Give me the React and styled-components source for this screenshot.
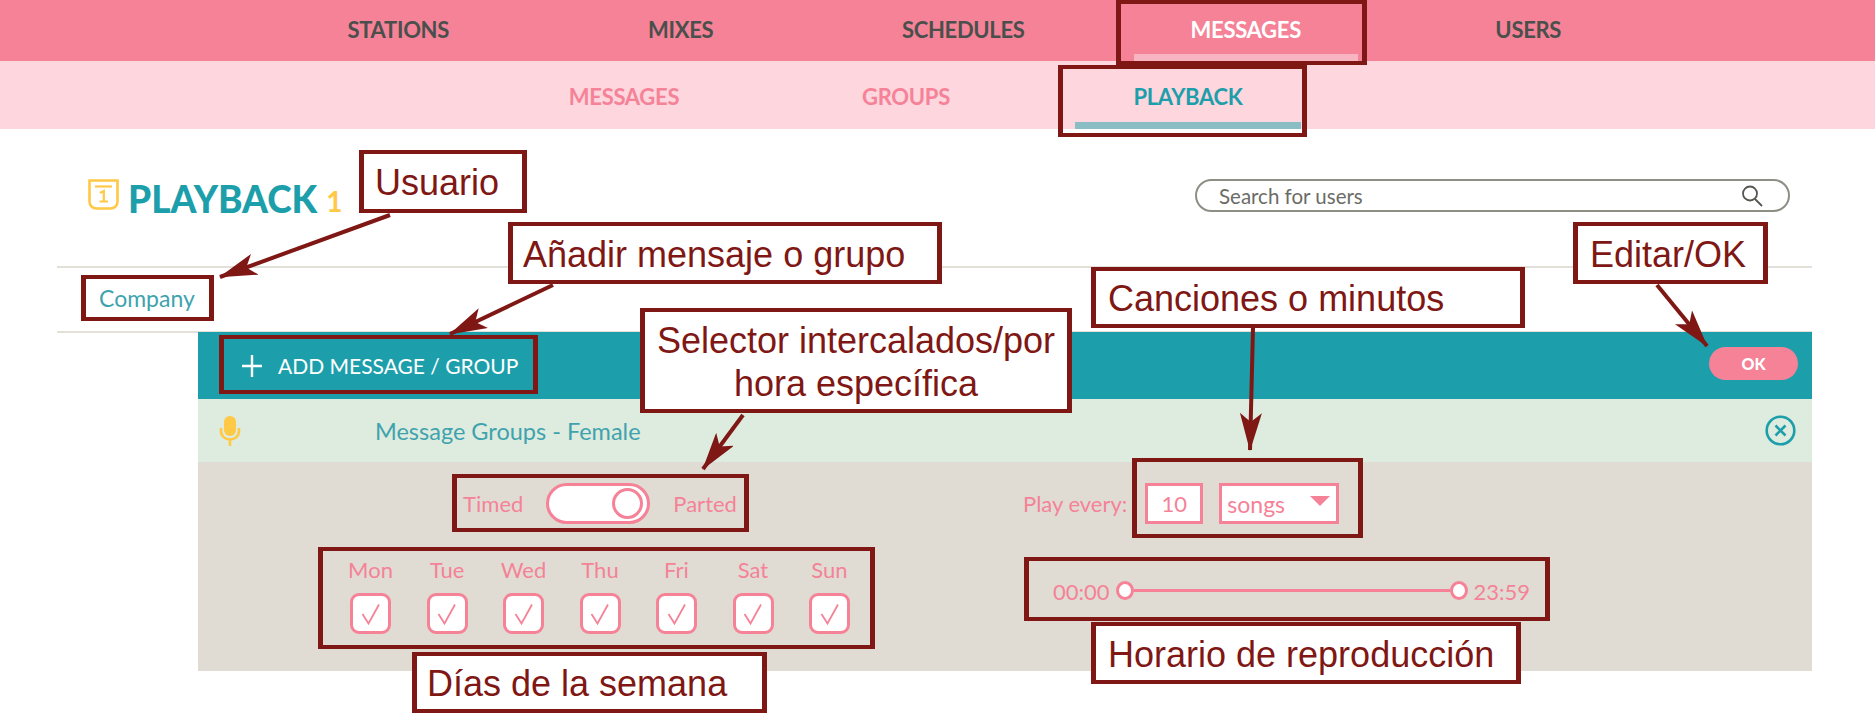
import styled, { createGlobalStyle } from "styled-components";

const PINK = "#f58297";
const TEAL = "#1d9fab";
const YELLOW = "#ffc845";
const MAROON = "#7f1714";
const UI_FONT = `"Lato", "Open Sans", sans-serif`;

const days = ["Mon", "Tue", "Wed", "Thu", "Fri", "Sat", "Sun"];

const notes = [
  { text: "Usuario", x: 359, y: 150, w: 168, h: 63, pad: 11 },
  { text: "Añadir mensaje o grupo", x: 508, y: 222, w: 434, h: 62, pad: 10 },
  { text: "Canciones o minutos", x: 1091, y: 267, w: 434, h: 61, pad: 12 },
  { text: "Editar/OK", x: 1573, y: 222, w: 195, h: 62, pad: 12 },
  { text: "Selector intercalados/por hora específica", x: 640, y: 308, w: 432, h: 105, pad: 10, center: true },
  { text: "Días de la semana", x: 412, y: 652, w: 355, h: 61, pad: 10 },
  { text: "Horario de reproducción", x: 1091, y: 622, w: 430, h: 62, pad: 12 },
];

const frames = [
  { x: 1116, y: 0, w: 251, h: 65 },
  { x: 1058, y: 65, w: 249, h: 72 },
  { x: 81, y: 275, w: 133, h: 46 },
  { x: 219, y: 335, w: 319, h: 59 },
  { x: 452, y: 474, w: 297, h: 58 },
  { x: 318, y: 547, w: 557, h: 102 },
  { x: 1132, y: 458, w: 231, h: 80 },
  { x: 1024, y: 557, w: 526, h: 64 },
];

const arrows = [
  [390, 215, 220, 277],
  [553, 285, 450, 334],
  [743, 415, 703, 469],
  [1253, 328, 1250, 450],
  [1657, 285, 1707, 346],
];

const App = () => {
  return (
    <Page>
      <GlobalStyle />
      <MainNav>
        <MainTab>STATIONS</MainTab>
        <MainTab>MIXES</MainTab>
        <MainTab>SCHEDULES</MainTab>
        <MainTab $active>MESSAGES</MainTab>
        <MainTab>USERS</MainTab>
      </MainNav>
      <SubNav>
        <SubTab>MESSAGES</SubTab>
        <SubTab>GROUPS</SubTab>
        <SubTab $active>PLAYBACK</SubTab>
      </SubNav>

      <Header>
        <Title>
          <svg width="31" height="32" viewBox="0 0 31 32" fill="none" stroke={YELLOW} strokeWidth="2.6">
            <path d="M1.500 1.500h28v21c0 4-3 7-7 7h-14c-4 0-7-3-7-7z" />
            <path d="M7 7.500h17" strokeWidth="2.200" />
            <path d="M12 14l3.800-2v10.500M11.500 22.500h8.500" strokeWidth="2.200" />
          </svg>
          <TitleText>PLAYBACK</TitleText>
          <TitleCount>1</TitleCount>
        </Title>
        <Search>
          <SearchText>Search for users</SearchText>
          <svg width="24" height="22" viewBox="0 0 24 22" fill="none" stroke="#55564f" strokeWidth="1.8">
            <circle cx="9" cy="8.500" r="7" />
            <path d="M14 14l7 7" />
          </svg>
        </Search>
      </Header>

      <CompanyRow>
        <CompanyName>Company</CompanyName>
      </CompanyRow>

      <Panel>
        <PanelBar>
          <AddButton>
            <svg width="20" height="22" viewBox="0 0 20 22" stroke="#fff" strokeWidth="2.4">
              <path d="M10 0v22M0 11h20" />
            </svg>
            <span>ADD MESSAGE / GROUP</span>
          </AddButton>
          <OkButton>OK</OkButton>
        </PanelBar>

        <MessageRow>
          <svg width="22" height="30" viewBox="0 0 22 30" fill={YELLOW}>
            <rect x="5" y="0" width="12" height="20" rx="6" />
            <path
              d="M2 12v3c0 5 4 8.500 9 8.500s9-3.500 9-8.500v-3"
              fill="none"
              stroke={YELLOW}
              strokeWidth="2.6"
            />
            <path d="M11 23v7" stroke={YELLOW} strokeWidth="2.6" />
          </svg>
          <MessageName>Message Groups - Female</MessageName>
          <svg width="31" height="31" viewBox="0 0 31 31" fill="none" stroke={TEAL} strokeWidth="2.6">
            <circle cx="15.500" cy="15.500" r="13.800" />
            <path d="M10.500 10.500l10 10M20.500 10.500l-10 10" />
          </svg>
        </MessageRow>

        <Settings>
          <LeftColumn>
            <ModeRow>
              <PinkLabel>Timed</PinkLabel>
              <Toggle>
                <Knob />
              </Toggle>
              <PinkLabel>Parted</PinkLabel>
            </ModeRow>
            <DayGrid>
              {days.map((day) => (
                <DayCell key={day}>
                  <PinkLabel>{day}</PinkLabel>
                  <DayCheck>
                    <svg width="22" height="22" viewBox="0 0 22 22" fill="none" stroke={PINK} strokeWidth="1.8">
                      <path d="M2.500 11l6 9.500L19 1.500" />
                    </svg>
                  </DayCheck>
                </DayCell>
              ))}
            </DayGrid>
          </LeftColumn>

          <RightColumn>
            <FrequencyRow>
              <PinkLabel>Play every:</PinkLabel>
              <NumberBox>10</NumberBox>
              <UnitSelect>
                <span>songs</span>
                <Caret />
              </UnitSelect>
            </FrequencyRow>
            <TimeRow>
              <PinkLabel>00:00</PinkLabel>
              <Slider>
                <SliderKnob />
                <SliderTrack />
                <SliderKnob />
              </Slider>
              <PinkLabel>23:59</PinkLabel>
            </TimeRow>
          </RightColumn>
        </Settings>
      </Panel>

      {/* callouts drawn over the screenshot */}
      {frames.map((f) => (
        <Frame key={`${f.x}-${f.y}`} $x={f.x} $y={f.y} $w={f.w} $h={f.h} />
      ))}
      <ArrowLayer width="1875" height="723" viewBox="0 0 1875 723">
        <defs>
          <marker
            id="barb"
            viewBox="0 0 38 22"
            markerWidth="38"
            markerHeight="22"
            refX="37"
            refY="11"
            markerUnits="userSpaceOnUse"
            orient="auto"
          >
            <path d="M0 0L38 11L0 22L9 11Z" fill={MAROON} />
          </marker>
        </defs>
        {arrows.map(([x1, y1, x2, y2]) => (
          <line
            key={x1}
            x1={x1}
            y1={y1}
            x2={x2}
            y2={y2}
            stroke={MAROON}
            strokeWidth="4"
            markerEnd="url(#barb)"
          />
        ))}
      </ArrowLayer>
      {notes.map((n) => (
        <Note key={n.text} $x={n.x} $y={n.y} $w={n.w} $h={n.h} $pad={n.pad} $center={n.center}>
          {n.text}
        </Note>
      ))}
    </Page>
  );
};

const GlobalStyle = createGlobalStyle`
  html, body {
    margin: 0;
    padding: 0;
    background: #fff;
  }
`;

const Page = styled.div`
  position: relative;
  width: 1875px;
  height: 723px;
  overflow: hidden;
  background: #fff;
  font-family: ${UI_FONT};
`;

const MainNav = styled.nav`
  display: flex;
  height: 61px;
  padding-left: 257px;
  background: ${PINK};
`;

const MainTab = styled.div`
  position: relative;
  width: 282.5px;
  display: flex;
  align-items: center;
  justify-content: center;
  padding-bottom: 3px;
  box-sizing: border-box;
  font-size: 22px;
  font-weight: 700;
  letter-spacing: -0.3px;
  color: ${(props) => (props.$active ? "#fff" : "#4a4f4c")};

  &::after {
    content: "";
    display: ${(props) => (props.$active ? "block" : "none")};
    position: absolute;
    left: 29px;
    right: 29px;
    bottom: 0;
    height: 7px;
    background: #f9b4c2;
  }
`;

const SubNav = styled.nav`
  display: flex;
  height: 68px;
  padding-left: 483px;
  background: #fdd6de;
`;

const SubTab = styled.div`
  position: relative;
  width: 282px;
  display: flex;
  align-items: center;
  justify-content: center;
  padding-top: 2px;
  box-sizing: border-box;
  font-size: 22px;
  font-weight: 700;
  letter-spacing: -0.3px;
  color: ${(props) => (props.$active ? TEAL : PINK)};

  &::after {
    content: "";
    display: ${(props) => (props.$active ? "block" : "none")};
    position: absolute;
    left: 28px;
    right: 28px;
    bottom: 0;
    height: 7px;
    background: #8abec4;
  }
`;

const Header = styled.header`
  display: flex;
  justify-content: space-between;
  height: 137px;
  padding: 50px 85px 0 88px;
  box-sizing: border-box;
`;

const Title = styled.div`
  display: flex;
  align-items: flex-start;
  height: 40px;
`;

const TitleText = styled.span`
  margin-left: 9px;
  font-size: 37px;
  line-height: 40px;
  font-weight: 900;
  color: ${TEAL};
`;

const TitleCount = styled.span`
  margin-left: 9px;
  margin-top: 2px;
  font-size: 28px;
  line-height: 40px;
  font-weight: 700;
  color: ${YELLOW};
`;

const Search = styled.div`
  width: 595px;
  height: 33px;
  display: flex;
  align-items: center;
  justify-content: space-between;
  padding: 0 23px 0 22px;
  box-sizing: border-box;
  border: 2px solid #8d8e85;
  border-radius: 17px;
`;

const SearchText = styled.span`
  font-size: 20.5px;
  color: #6b6c66;
`;

const CompanyRow = styled.div`
  height: 67px;
  margin: 0 63px -1px 57px;
  padding: 0 0 4px 42px;
  display: flex;
  align-items: center;
  box-sizing: border-box;
  border-top: 2px solid #e3e0d9;
  border-bottom: 2px solid #e3e0d9;
`;

const CompanyName = styled.span`
  font-size: 23px;
  color: #3fa3ad;
`;

const Panel = styled.section`
  margin: 0 63px 0 198px;
`;

const PanelBar = styled.div`
  height: 67px;
  display: flex;
  align-items: center;
  justify-content: space-between;
  padding: 0 14px 0 44px;
  background: ${TEAL};
`;

const AddButton = styled.div`
  display: flex;
  align-items: center;
  gap: 16px;
  font-size: 21px;
  color: #fff;
`;

const OkButton = styled.div`
  width: 89px;
  height: 33px;
  margin-bottom: 5px;
  display: flex;
  align-items: center;
  justify-content: center;
  border-radius: 17px;
  background: ${PINK};
  color: #fff;
  font-size: 16px;
  font-weight: 900;
`;

const MessageRow = styled.div`
  height: 63px;
  display: flex;
  align-items: center;
  padding: 0 16px 0 21px;
  background: #deebdf;
`;

const MessageName = styled.span`
  flex: 1;
  margin-left: 134px;
  font-size: 23.5px;
  color: #3fa3ad;
`;

const Settings = styled.div`
  height: 209px;
  display: flex;
  background: #e0dcd4;
`;

const LeftColumn = styled.div`
  width: 804px;
  padding-top: 21px;
  box-sizing: border-box;
`;

const ModeRow = styled.div`
  display: flex;
  align-items: center;
  justify-content: center;
  gap: 23px;
  height: 41px;
`;

const PinkLabel = styled.span`
  font-size: 22px;
  color: ${PINK};
`;

const Toggle = styled.div`
  width: 104px;
  height: 41px;
  display: flex;
  align-items: center;
  justify-content: flex-end;
  padding-right: 4px;
  box-sizing: border-box;
  border: 3px solid ${PINK};
  border-radius: 21px;
  background: #fff;
`;

const Knob = styled.div`
  width: 31px;
  height: 31px;
  box-sizing: border-box;
  border: 3px solid ${PINK};
  border-radius: 50%;
  background: #fff;
`;

const DayGrid = styled.div`
  display: flex;
  justify-content: center;
  margin-top: 32px;
`;

const DayCell = styled.div`
  width: 76.5px;
  display: flex;
  flex-direction: column;
  align-items: center;
  gap: 10px;
`;

const DayCheck = styled.div`
  width: 41px;
  height: 41px;
  display: flex;
  align-items: center;
  justify-content: center;
  box-sizing: border-box;
  border: 3px solid ${PINK};
  border-radius: 9px;
  background: #fff;
`;

const RightColumn = styled.div`
  padding: 21px 0 0 21px;
`;

const FrequencyRow = styled.div`
  display: flex;
  align-items: center;
  height: 41px;
`;

const NumberBox = styled.div`
  width: 58px;
  height: 41px;
  margin-left: 18px;
  display: flex;
  align-items: center;
  justify-content: center;
  box-sizing: border-box;
  border: 3px solid ${PINK};
  background: #fff;
  font-size: 22px;
  color: ${PINK};
`;

const UnitSelect = styled.div`
  width: 120px;
  height: 41px;
  margin-left: 16px;
  padding: 0 6px 0 5px;
  display: flex;
  align-items: center;
  justify-content: space-between;
  box-sizing: border-box;
  border: 3px solid ${PINK};
  background: #fff;
  font-size: 23px;
  color: ${PINK};
`;

const Caret = styled.div`
  width: 0;
  height: 0;
  margin-bottom: 5px;
  border-left: 10px solid transparent;
  border-right: 10px solid transparent;
  border-top: 10px solid ${PINK};
`;

const TimeRow = styled.div`
  display: flex;
  align-items: center;
  gap: 6px;
  margin-top: 54px;
  padding-left: 30px;
`;

const Slider = styled.div`
  width: 352px;
  display: flex;
  align-items: center;
  margin-bottom: 3px;
`;

const SliderTrack = styled.div`
  flex: 1;
  height: 3px;
  background: ${PINK};
`;

const SliderKnob = styled.div`
  width: 18px;
  height: 19px;
  box-sizing: border-box;
  border: 3px solid ${PINK};
  border-radius: 50%;
  background: #fff;
`;

const Frame = styled.div`
  position: absolute;
  left: ${(props) => props.$x}px;
  top: ${(props) => props.$y}px;
  width: ${(props) => props.$w}px;
  height: ${(props) => props.$h}px;
  box-sizing: border-box;
  border: 4px solid ${MAROON};
  border-left-width: 5px;
  border-right-width: 5px;
`;

const Note = styled(Frame)`
  display: flex;
  align-items: center;
  justify-content: ${(props) => (props.$center ? "center" : "flex-start")};
  padding: 2px ${(props) => props.$pad}px 0;
  background: #fff;
  font-family: "Liberation Sans", Arial, sans-serif;
  font-size: 36px;
  line-height: 43px;
  color: ${MAROON};
  text-align: ${(props) => (props.$center ? "center" : "left")};
`;

const ArrowLayer = styled.svg`
  position: absolute;
  left: 0;
  top: 0;
  pointer-events: none;
`;

export default App;
